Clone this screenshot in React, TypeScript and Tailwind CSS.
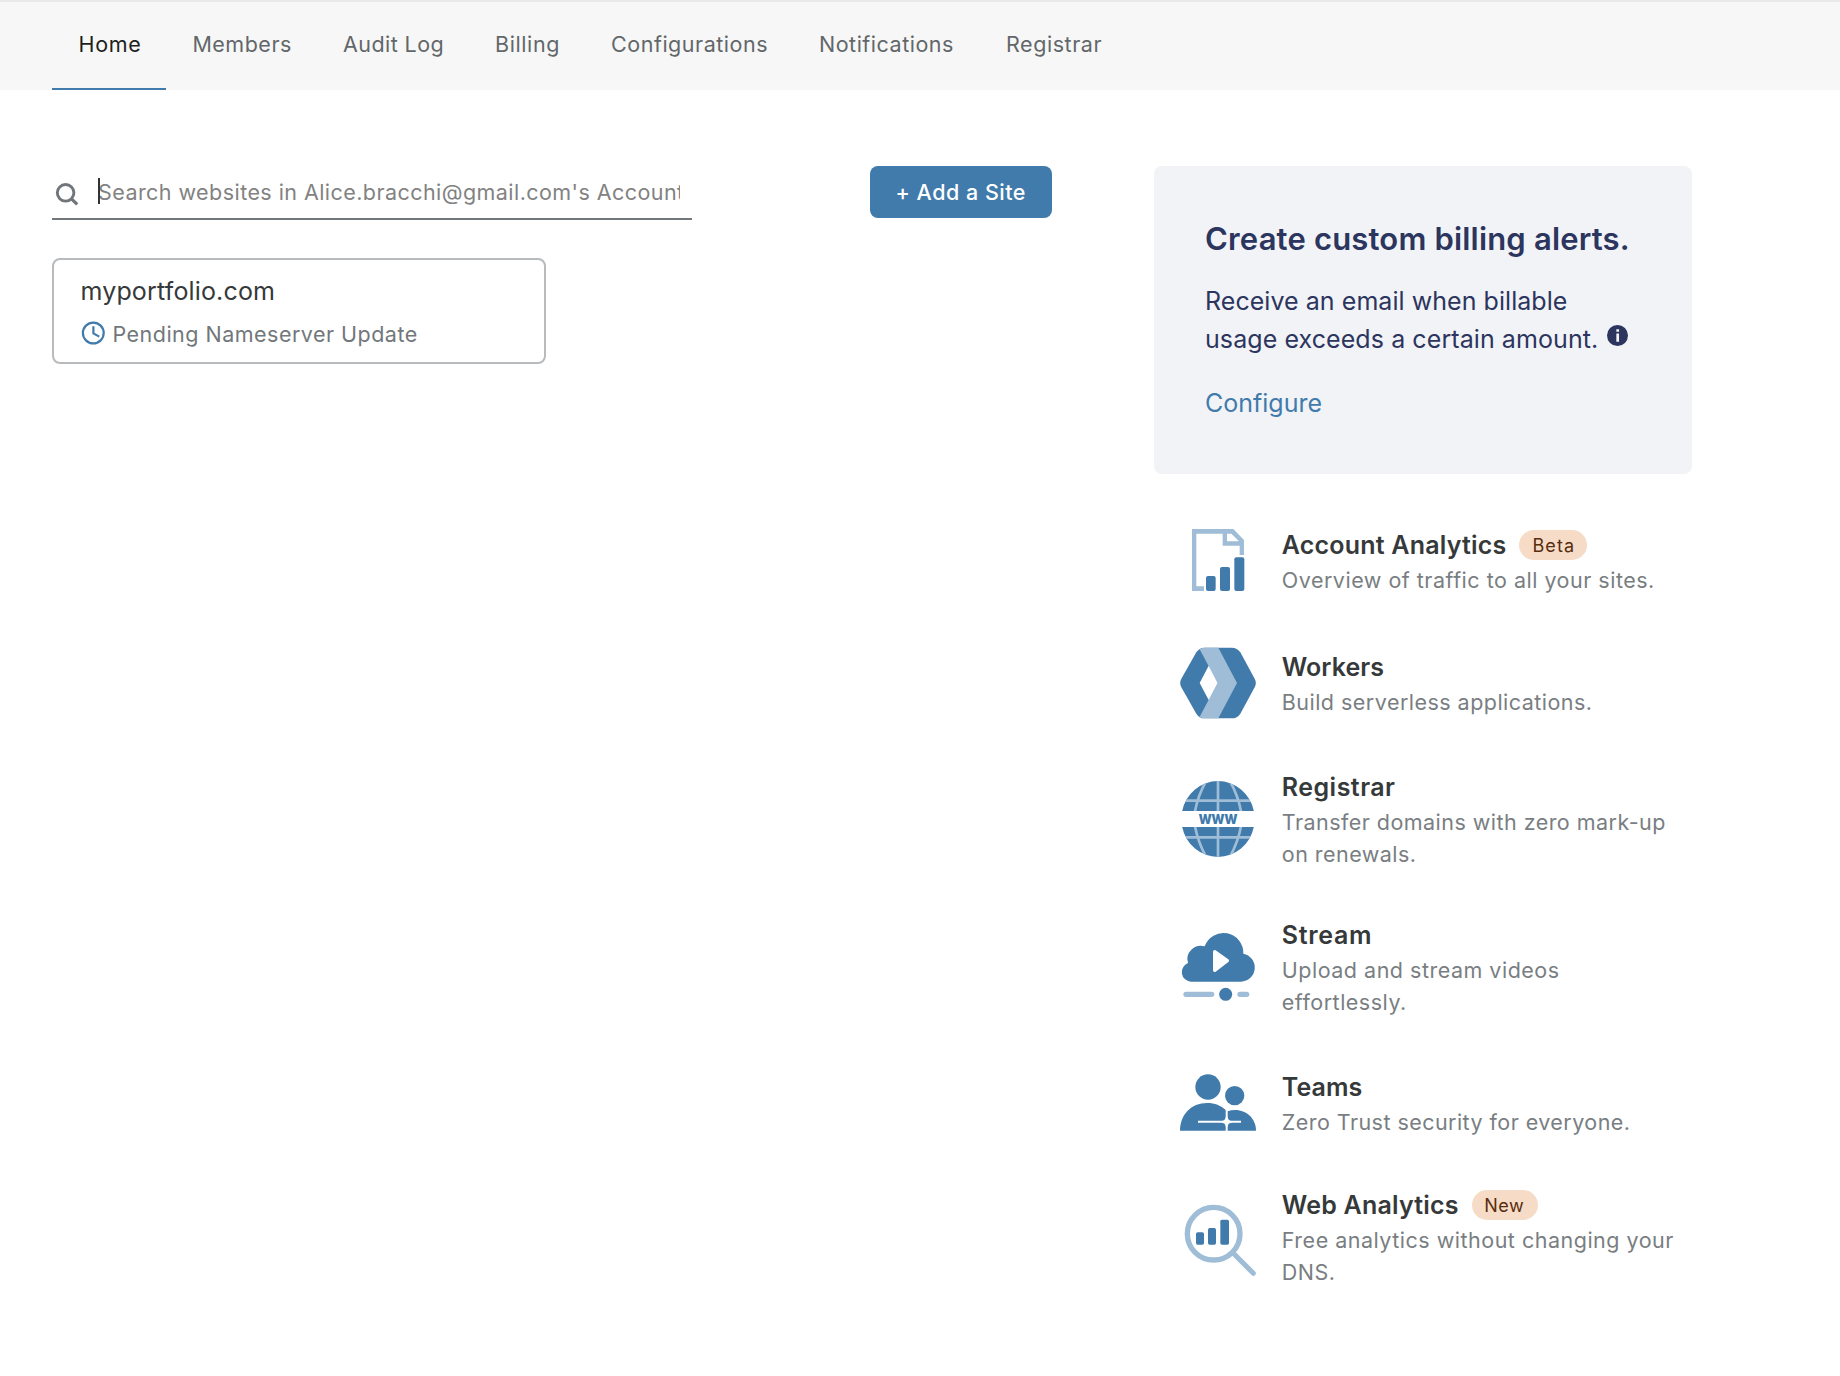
import type { ReactNode } from 'react';

const DARK = '#417BAB';
const LIGHT = '#9FBDD6';

const tabs = [
  { label: 'Home', cls: 'w-[114px] pl-[26.5px] tracking-[0.7px]', active: true },
  { label: 'Members', cls: 'w-[151px] pl-[26.4px] tracking-[0.5px]' },
  { label: 'Audit Log', cls: 'w-[152px] pl-[26px] tracking-[0.43px]' },
  { label: 'Billing', cls: 'w-[116px] pl-[26px] tracking-[0.6px]' },
  { label: 'Configurations', cls: 'w-[208px] pl-[26px] tracking-[0.53px]' },
  { label: 'Notifications', cls: 'w-[187px] pl-[26px] tracking-[0.51px]' },
  { label: 'Registrar', cls: 'w-[148px] pl-[26px] tracking-[0.56px]' },
];

function Icon({ top, children }: { top: number; children: ReactNode }) {
  return (
    <svg className="h-20 w-[100px] shrink-0 overflow-visible" viewBox={`0 ${top} 300 240`} aria-hidden="true">
      {children}
    </svg>
  );
}

const AnalyticsIcon = (
  <Icon top={57}>
    <path
      fill={LIGHT}
      fillRule="evenodd"
      d="M66 57H190L222 90V135H209V107H158V71H79V229H102V243H66Z M171 71V94H207L184 71Z"
    />
    <g fill={DARK}>
      <rect x="108" y="198" width="29" height="45" rx="6" />
      <rect x="150" y="171" width="30" height="72" rx="6" />
      <rect x="193" y="142" width="30" height="101" rx="6" />
    </g>
  </Icon>
);

const WorkersIcon = (
  <Icon top={48}>
    <path
      fill={DARK}
      d="M103 38H185Q202 38 211 52L254 131Q261 144 254 157L211 236Q202 250 185 250H103Q88 250 79 236L34 157Q27 144 34 131L79 52Q88 38 103 38Z"
    />
    <path fill={LIGHT} d="M89 43Q95 38 103 38H145L201 144L145 250H103Q95 250 89 245L143 144Z" />
    <path fill="#fff" d="M116 92L143 144L116 195L89 144Z" />
  </Icon>
);

const RegistrarIcon = (
  <Icon top={3}>
    <defs>
      <clipPath id="globe">
        <path d="M36.5 123A110 114 0 0 1 251.5 123ZM36.5 171A110 114 0 0 0 251.5 171Z" />
      </clipPath>
    </defs>
    <g clipPath="url(#globe)">
      <rect x="30" y="30" width="230" height="235" fill={DARK} />
      <g stroke={LIGHT} strokeWidth="8" fill="none">
        <path d="M144 30V264M30 92H260M30 202H260" />
        <path d="M108 34Q84 76 75 124M180 34Q204 76 213 124M75 169Q84 217 108 260M213 169Q204 217 180 260" />
      </g>
    </g>
    <text
      x="86"
      y="162"
      textLength="116"
      lengthAdjust="spacingAndGlyphs"
      fill={DARK}
      className="font-[Inter] text-[55px] font-extrabold"
    >
      www
    </text>
  </Icon>
);

const StreamIcon = (
  <Icon top={-3}>
    <path
      fill={DARK}
      d="M62 185A29 29 0 0 1 54 129A40 40 0 0 1 104 79A59.7 59.7 0 0 1 220 101A42.4 42.4 0 0 1 213 185Z"
    />
    <path d="M134 95L172 122L134 151Z" fill="#fff" stroke="#fff" strokeWidth="10" strokeLinejoin="round" />
    <path d="M48 223H125M210 223H230" stroke={LIGHT} strokeWidth="16" strokeLinecap="round" />
    <circle cx="167" cy="223" r="19.5" fill={DARK} />
  </Icon>
);

const TeamsIcon = (
  <Icon top={33}>
    <g fill={DARK}>
      <circle cx="114" cy="81" r="38" />
      <circle cx="194" cy="107" r="29" />
      <path d="M30 212C30 165 62 129 112 129C134 129 153 137 167 150V212Z" />
      <path d="M173 154Q183 150 195 150C232 150 258 178 258 212H173Z" />
    </g>
    <path d="M84 185.5H213" stroke="#fff" strokeWidth="6" />
    <path d="M170 170Q172 184 186 185.5Q172 187 170 201Q168 187 154 185.5Q168 184 170 170Z" fill="#fff" stroke="#fff" strokeWidth="4" />
  </Icon>
);

const WebAnalyticsIcon = (
  <Icon top={-3}>
    <circle cx="131" cy="131" r="79" fill="none" stroke={LIGHT} strokeWidth="16" />
    <path d="M190 190L250 250" stroke={LIGHT} strokeWidth="15" strokeLinecap="round" />
    <g fill={DARK}>
      <rect x="78" y="127" width="24" height="37" rx="5" />
      <rect x="114" y="114" width="24" height="50" rx="5" />
      <rect x="151" y="89" width="26" height="75" rx="5" />
    </g>
  </Icon>
);

type Product = {
  title: string;
  titleCls: string;
  height: string;
  icon: ReactNode;
  badge?: string;
  badgeCls?: string;
  lines: string[];
  lineCls: string;
};

const products: Product[] = [
  {
    title: 'Account Analytics', titleCls: 'tracking-[0.2px]', height: 'h-[122px]', icon: AnalyticsIcon,
    badge: 'Beta', badgeCls: 'w-[68px] pl-[13px] tracking-[1.1px]',
    lines: ['Overview of traffic to all your sites.'], lineCls: 'tracking-[0.5px]',
  },
  {
    title: 'Workers', titleCls: 'tracking-[0.05px]', height: 'h-[120px]', icon: WorkersIcon,
    lines: ['Build serverless applications.'], lineCls: 'tracking-[0.47px]',
  },
  {
    title: 'Registrar', titleCls: 'tracking-[0.47px]', height: 'h-[148px]', icon: RegistrarIcon,
    lines: ['Transfer domains with zero mark-up', 'on renewals.'], lineCls: 'tracking-[0.46px]',
  },
  {
    title: 'Stream', titleCls: 'tracking-[0.68px]', height: 'h-[152px]', icon: StreamIcon,
    lines: ['Upload and stream videos', 'effortlessly.'], lineCls: 'tracking-[0.5px]',
  },
  {
    title: 'Teams', titleCls: 'tracking-[0.05px]', height: 'h-[118px]', icon: TeamsIcon,
    lines: ['Zero Trust security for everyone.'], lineCls: 'tracking-[0.45px]',
  },
  {
    title: 'Web Analytics', titleCls: 'tracking-[0.2px]', height: 'h-[100px]', icon: WebAnalyticsIcon,
    badge: 'New', badgeCls: 'w-[66px] pl-[12.5px] tracking-[0.5px]',
    lines: ['Free analytics without changing your', 'DNS.'], lineCls: 'tracking-[0.5px]',
  },
];

export default function App() {
  return (
    <div className="min-h-[1376px] w-full overflow-hidden bg-white font-[Inter,sans-serif] text-[21.5px] leading-8 text-[#36393A]">
      <nav className="flex h-[90px] border-t-2 border-[#E9E9E9] bg-[#F7F7F7] pl-[52px]">
        {tabs.map((t) => (
          <a
            key={t.label}
            className={`h-[88px] pt-[26px] whitespace-nowrap ${t.cls} ${
              t.active ? 'border-b-2 border-[#417BAB] text-[#1D1F20]' : 'text-[#62676A]'
            }`}
          >
            {t.label}
          </a>
        ))}
      </nav>

      <main className="flex gap-[102px] pt-[76px] pl-[52px]">
        <section className="w-[1000px]">
          <div className="flex items-start justify-between">
            <div className="flex h-[54px] w-[640px] items-start border-b-2 border-[#72777B]">
              <svg className="mt-[15.5px] ml-[3px] size-6 shrink-0" viewBox="0 0 24 24" fill="none" stroke="#6F757A" strokeWidth="2.9">
                <circle cx="10.6" cy="10.8" r="8.3" />
                <path d="M16.2 16.6L22.2 22.4" strokeWidth="3.2" />
              </svg>
              <div className="relative mt-2.5 ml-[19px] w-[582px]">
                <div className="overflow-hidden tracking-[0.44px] whitespace-nowrap text-[#828282]">
                  Search websites in Alice.bracchi@gmail.com's Account
                </div>
                <span className="absolute top-0.5 left-0 h-[26px] w-0.5 bg-[#333]" />
              </div>
            </div>
            <button className="h-[52px] w-[182px] rounded-lg bg-[#417BAB] pl-[25.5px] text-left font-medium tracking-[0.5px] whitespace-nowrap text-white">
              + Add a Site
            </button>
          </div>

          <div className="mt-[38px] h-[106px] w-[494px] rounded-lg border-2 border-[#B7BBBD] pt-[15px] pl-[26.5px]">
            <div className="text-[25px] tracking-[0.16px]">myportfolio.com</div>
            <div className="mt-[11px] flex items-start text-[#72777B]">
              <svg className="mt-[3px] mr-2 size-6" viewBox="0 0 24 24" fill="none" stroke={DARK} strokeWidth="2.2">
                <circle cx="12.3" cy="12" r="10.4" />
                <path d="M12.4 5.2V12.4L18.3 15.6" />
              </svg>
              <span className="tracking-[0.48px]">Pending Nameserver Update</span>
            </div>
          </div>
        </section>

        <aside className="w-[538px]">
          <div className="h-[308px] rounded-lg bg-[#F2F3F7] pt-[53px] pl-[51px] text-[25px] leading-[38px] text-[#2C355E]">
            <h2 className="text-[31px] leading-10 font-semibold tracking-[0.18px]">Create custom billing alerts.</h2>
            <p className="mt-[23px] tracking-[0.05px]">Receive an email when billable</p>
            <p className="flex tracking-[0.08px]">
              usage exceeds a certain amount.
              <svg className="mt-[5px] ml-[9px] size-[21px]" viewBox="0 0 21 21">
                <circle cx="10.5" cy="10.5" r="10.5" fill="#2C355E" />
                <path d="M10.7 4.2V6.8M10.7 8.4V16.8" stroke="#F2F3F7" strokeWidth="2.7" />
              </svg>
            </p>
            <a className="mt-[26px] block text-[#417BAB]">Configure</a>
          </div>

          <ul className="mt-[55px] pl-4">
            {products.map((p) => (
              <li key={p.title} className={`flex gap-[11.8px] ${p.height}`}>
                {p.icon}
                <div className="whitespace-nowrap">
                  <div className="flex items-center">
                    <h3 className={`text-[25px] font-semibold ${p.titleCls}`}>{p.title}</h3>
                    {p.badge && (
                      <span className={`ml-[13px] h-[30px] rounded-full bg-[#F6DCC6] text-lg leading-[31px] text-[#592C0F] ${p.badgeCls}`}>
                        {p.badge}
                      </span>
                    )}
                  </div>
                  <p className={`mt-[3px] text-[#797E82] ${p.lineCls}`}>
                    {p.lines.map((l) => (
                      <span key={l} className="block">{l}</span>
                    ))}
                  </p>
                </div>
              </li>
            ))}
          </ul>
        </aside>
      </main>
    </div>
  );
}
